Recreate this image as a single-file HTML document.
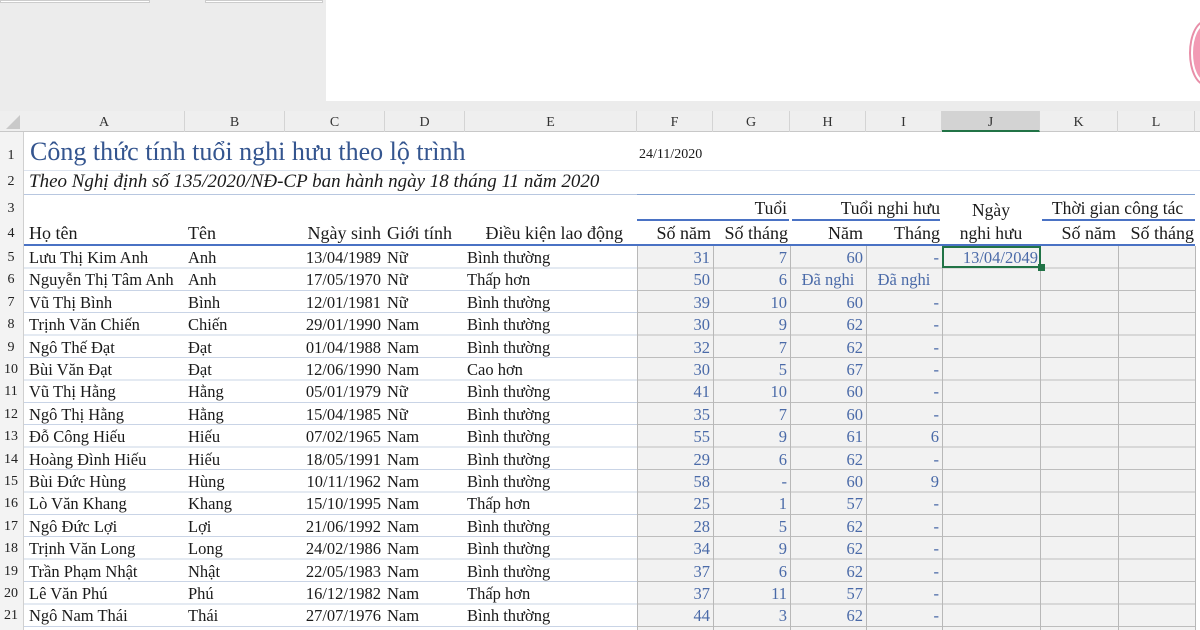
<!DOCTYPE html>
<html><head><meta charset="utf-8"><style>
body{margin:0;width:1200px;height:630px;overflow:hidden;background:#fff;position:relative;font-family:"Liberation Serif",serif;font-size:16.5px;color:#1a1a1a}
div,span{position:absolute;box-sizing:border-box}
.r{height:22px;line-height:23px;white-space:nowrap}
.rn{left:0;width:22px;text-align:center;font-size:14px;color:#222}
.a{left:29px}.b{left:188px}.c{left:285px;width:96px;text-align:right}.d{left:387px}.e{left:467px}
.f{left:637px;width:73px;text-align:right;color:#4a6aa8}.g{left:713px;width:74px;text-align:right;color:#4a6aa8}
.h{left:790px;width:73px;text-align:right;color:#4a6aa8}.i{left:866px;width:73px;text-align:right;color:#4a6aa8}
.hl{left:790px;width:76px;text-align:center;color:#4a6aa8}.il{left:866px;width:76px;text-align:center;color:#4a6aa8}
.vl{top:246px;height:384px;width:1px;background:#b8b8b8}
.ch{top:111px;height:21px;line-height:23px;text-align:center;font-size:14px;color:#333;border-right:1px solid #d4d4d4}
</style></head><body>
<div style="left:0;top:0;width:1200px;height:111px;background:#ececec"></div>
<div style="left:326px;top:0;width:874px;height:101px;background:#fff"></div>
<div style="left:0;top:0;width:150px;height:3px;background:#fff;border:1px solid #ccc"></div>
<div style="left:205px;top:0;width:118px;height:3px;background:#fff;border:1px solid #ccc"></div>
<div style="left:1189px;top:20px;width:34px;height:66px;border-radius:50%;border:2px solid #e88ea8;background:#fff"></div>
<div style="left:1193px;top:25px;width:26px;height:56px;border-radius:50%;background:#f29ab4"></div>
<!-- column header -->
<div style="left:0;top:111px;width:1200px;height:21px;background:#efefef;border-bottom:1px solid #c8c8c8"></div>
<div style="left:6px;top:115px;width:0;height:0;border-left:14px solid transparent;border-bottom:14px solid #c9c9c9"></div>
<div class="ch" style="left:24px;width:161px">A</div><div class="ch" style="left:185px;width:100px">B</div>
<div class="ch" style="left:285px;width:100px">C</div><div class="ch" style="left:385px;width:80px">D</div>
<div class="ch" style="left:465px;width:172px">E</div><div class="ch" style="left:637px;width:76px">F</div>
<div class="ch" style="left:713px;width:77px">G</div><div class="ch" style="left:790px;width:76px">H</div>
<div class="ch" style="left:866px;width:76px">I</div>
<div class="ch" style="left:942px;width:98px;background:#d3d3d3;border-bottom:2px solid #217346">J</div>
<div class="ch" style="left:1040px;width:78px">K</div><div class="ch" style="left:1118px;width:77px">L</div>
<div style="left:0;top:132px;width:24px;height:498px;background:#f3f3f3;border-right:1px solid #d0d0d0"></div>
<!-- grids -->
<div style="left:24px;top:246px;width:613px;height:384px;background:repeating-linear-gradient(to bottom,transparent 0,transparent 21.4px,#c9d4e6 21.4px,#c9d4e6 22.4px)"></div>
<div style="left:637px;top:246px;width:558px;height:384px;background:repeating-linear-gradient(to bottom,#f2f2f2 0,#f2f2f2 21.4px,#bdbdbd 21.4px,#bdbdbd 22.4px)"></div>
<div class="vl" style="left:637px"></div><div class="vl" style="left:713px"></div><div class="vl" style="left:790px"></div>
<div class="vl" style="left:866px"></div><div class="vl" style="left:942px"></div><div class="vl" style="left:1040px"></div>
<div class="vl" style="left:1118px"></div><div class="vl" style="left:1195px"></div>
<!-- header lines -->
<div style="left:24px;top:170px;width:1176px;height:1px;background:#dde4ef"></div>
<div style="left:24px;top:194px;width:1171px;height:1px;background:#b8c7e0"></div>
<div style="left:637px;top:194px;width:558px;height:1px;background:#7f9fd0"></div>
<div style="left:637px;top:219px;width:152px;height:2px;background:#4a72c4"></div>
<div style="left:792px;top:219px;width:148px;height:2px;background:#4a72c4"></div>
<div style="left:1042px;top:219px;width:153px;height:2px;background:#4a72c4"></div>
<div style="left:24px;top:244px;width:1171px;height:2px;background:#4a72c4"></div>
<div style="left:942px;top:246px;width:99px;height:22px;border:2px solid #217346"></div>
<div style="left:1038px;top:264px;width:7px;height:7px;background:#217346"></div>
<!-- rows 1-4 -->
<div class="r rn" style="top:144px">1</div><div class="r rn" style="top:170px">2</div><div class="r rn" style="top:197px">3</div><div class="r rn" style="top:222px">4</div>
<div class="r" style="left:30px;top:136px;font-size:26px;line-height:31px;color:#34558f">Công thức tính tuổi nghi hưu theo lộ trình</div>
<div class="r" style="left:639px;top:143px;font-size:14px">24/11/2020</div>
<div class="r" style="left:29px;top:170px;font-size:19px;font-style:italic">Theo Nghị định số 135/2020/NĐ-CP ban hành ngày 18 tháng 11 năm 2020</div>
<div class="r" style="left:713px;top:197px;width:74px;text-align:right;font-size:17.5px">Tuổi</div>
<div class="r" style="left:790px;top:197px;width:150px;text-align:right;font-size:17.5px">Tuổi nghi hưu</div>
<div class="r" style="left:942px;top:199px;width:98px;text-align:center;font-size:17.5px">Ngày</div>
<div class="r" style="left:1040px;top:197px;width:155px;text-align:center;font-size:17.5px">Thời gian công tác</div>
<div class="r" style="left:29px;top:222px;font-size:18px">Họ tên</div>
<div class="r" style="left:188px;top:222px;font-size:18px">Tên</div>
<div class="r" style="left:285px;top:222px;width:96px;text-align:right;font-size:18px">Ngày sinh</div>
<div class="r" style="left:387px;top:222px;font-size:18px">Giới tính</div>
<div class="r" style="left:465px;top:222px;width:158px;text-align:right;font-size:18px">Điều kiện lao động</div>
<div class="r" style="left:637px;top:222px;width:74px;text-align:right;font-size:18px">Số năm</div>
<div class="r" style="left:713px;top:222px;width:75px;text-align:right;font-size:18px">Số tháng</div>
<div class="r" style="left:790px;top:222px;width:73px;text-align:right;font-size:18px">Năm</div>
<div class="r" style="left:866px;top:222px;width:74px;text-align:right;font-size:18px">Tháng</div>
<div class="r" style="left:942px;top:222px;width:98px;text-align:center;font-size:17.5px">nghi hưu</div>
<div class="r" style="left:1040px;top:222px;width:76px;text-align:right;font-size:18px">Số năm</div>
<div class="r" style="left:1118px;top:222px;width:76px;text-align:right;font-size:18px">Số tháng</div>
<!-- data rows -->
<div style="left:0;top:246px;width:1200px;height:23px"><span class="r rn">5</span><span class="r a">Lưu Thị Kim Anh</span><span class="r b">Anh</span><span class="r c">13/04/1989</span><span class="r d">Nữ</span><span class="r e">Bình thường</span><span class="r f">31</span><span class="r g">7</span><span class="r h">60</span><span class="r i">-</span><span class="r" style="left:942px;width:96px;text-align:right;color:#4a6aa8">13/04/2049</span></div>
<div style="left:0;top:268.4px;width:1200px;height:23px"><span class="r rn">6</span><span class="r a">Nguyễn Thị Tâm Anh</span><span class="r b">Anh</span><span class="r c">17/05/1970</span><span class="r d">Nữ</span><span class="r e">Thấp hơn</span><span class="r f">50</span><span class="r g">6</span><span class="r hl">Đã nghi</span><span class="r il">Đã nghi</span></div>
<div style="left:0;top:290.8px;width:1200px;height:23px"><span class="r rn">7</span><span class="r a">Vũ Thị Bình</span><span class="r b">Bình</span><span class="r c">12/01/1981</span><span class="r d">Nữ</span><span class="r e">Bình thường</span><span class="r f">39</span><span class="r g">10</span><span class="r h">60</span><span class="r i">-</span></div>
<div style="left:0;top:313.2px;width:1200px;height:23px"><span class="r rn">8</span><span class="r a">Trịnh Văn Chiến</span><span class="r b">Chiến</span><span class="r c">29/01/1990</span><span class="r d">Nam</span><span class="r e">Bình thường</span><span class="r f">30</span><span class="r g">9</span><span class="r h">62</span><span class="r i">-</span></div>
<div style="left:0;top:335.6px;width:1200px;height:23px"><span class="r rn">9</span><span class="r a">Ngô Thế Đạt</span><span class="r b">Đạt</span><span class="r c">01/04/1988</span><span class="r d">Nam</span><span class="r e">Bình thường</span><span class="r f">32</span><span class="r g">7</span><span class="r h">62</span><span class="r i">-</span></div>
<div style="left:0;top:358px;width:1200px;height:23px"><span class="r rn">10</span><span class="r a">Bùi Văn Đạt</span><span class="r b">Đạt</span><span class="r c">12/06/1990</span><span class="r d">Nam</span><span class="r e">Cao hơn</span><span class="r f">30</span><span class="r g">5</span><span class="r h">67</span><span class="r i">-</span></div>
<div style="left:0;top:380.4px;width:1200px;height:23px"><span class="r rn">11</span><span class="r a">Vũ Thị Hằng</span><span class="r b">Hằng</span><span class="r c">05/01/1979</span><span class="r d">Nữ</span><span class="r e">Bình thường</span><span class="r f">41</span><span class="r g">10</span><span class="r h">60</span><span class="r i">-</span></div>
<div style="left:0;top:402.8px;width:1200px;height:23px"><span class="r rn">12</span><span class="r a">Ngô Thị Hằng</span><span class="r b">Hằng</span><span class="r c">15/04/1985</span><span class="r d">Nữ</span><span class="r e">Bình thường</span><span class="r f">35</span><span class="r g">7</span><span class="r h">60</span><span class="r i">-</span></div>
<div style="left:0;top:425.2px;width:1200px;height:23px"><span class="r rn">13</span><span class="r a">Đỗ Công Hiếu</span><span class="r b">Hiếu</span><span class="r c">07/02/1965</span><span class="r d">Nam</span><span class="r e">Bình thường</span><span class="r f">55</span><span class="r g">9</span><span class="r h">61</span><span class="r i">6</span></div>
<div style="left:0;top:447.6px;width:1200px;height:23px"><span class="r rn">14</span><span class="r a">Hoàng Đình Hiếu</span><span class="r b">Hiếu</span><span class="r c">18/05/1991</span><span class="r d">Nam</span><span class="r e">Bình thường</span><span class="r f">29</span><span class="r g">6</span><span class="r h">62</span><span class="r i">-</span></div>
<div style="left:0;top:470px;width:1200px;height:23px"><span class="r rn">15</span><span class="r a">Bùi Đức Hùng</span><span class="r b">Hùng</span><span class="r c">10/11/1962</span><span class="r d">Nam</span><span class="r e">Bình thường</span><span class="r f">58</span><span class="r g">-</span><span class="r h">60</span><span class="r i">9</span></div>
<div style="left:0;top:492.4px;width:1200px;height:23px"><span class="r rn">16</span><span class="r a">Lò Văn Khang</span><span class="r b">Khang</span><span class="r c">15/10/1995</span><span class="r d">Nam</span><span class="r e">Thấp hơn</span><span class="r f">25</span><span class="r g">1</span><span class="r h">57</span><span class="r i">-</span></div>
<div style="left:0;top:514.8px;width:1200px;height:23px"><span class="r rn">17</span><span class="r a">Ngô Đức Lợi</span><span class="r b">Lợi</span><span class="r c">21/06/1992</span><span class="r d">Nam</span><span class="r e">Bình thường</span><span class="r f">28</span><span class="r g">5</span><span class="r h">62</span><span class="r i">-</span></div>
<div style="left:0;top:537.2px;width:1200px;height:23px"><span class="r rn">18</span><span class="r a">Trịnh Văn Long</span><span class="r b">Long</span><span class="r c">24/02/1986</span><span class="r d">Nam</span><span class="r e">Bình thường</span><span class="r f">34</span><span class="r g">9</span><span class="r h">62</span><span class="r i">-</span></div>
<div style="left:0;top:559.6px;width:1200px;height:23px"><span class="r rn">19</span><span class="r a">Trần Phạm Nhật</span><span class="r b">Nhật</span><span class="r c">22/05/1983</span><span class="r d">Nam</span><span class="r e">Bình thường</span><span class="r f">37</span><span class="r g">6</span><span class="r h">62</span><span class="r i">-</span></div>
<div style="left:0;top:582px;width:1200px;height:23px"><span class="r rn">20</span><span class="r a">Lê Văn Phú</span><span class="r b">Phú</span><span class="r c">16/12/1982</span><span class="r d">Nam</span><span class="r e">Thấp hơn</span><span class="r f">37</span><span class="r g">11</span><span class="r h">57</span><span class="r i">-</span></div>
<div style="left:0;top:604.4px;width:1200px;height:23px"><span class="r rn">21</span><span class="r a">Ngô Nam Thái</span><span class="r b">Thái</span><span class="r c">27/07/1976</span><span class="r d">Nam</span><span class="r e">Bình thường</span><span class="r f">44</span><span class="r g">3</span><span class="r h">62</span><span class="r i">-</span></div>
</body></html>
